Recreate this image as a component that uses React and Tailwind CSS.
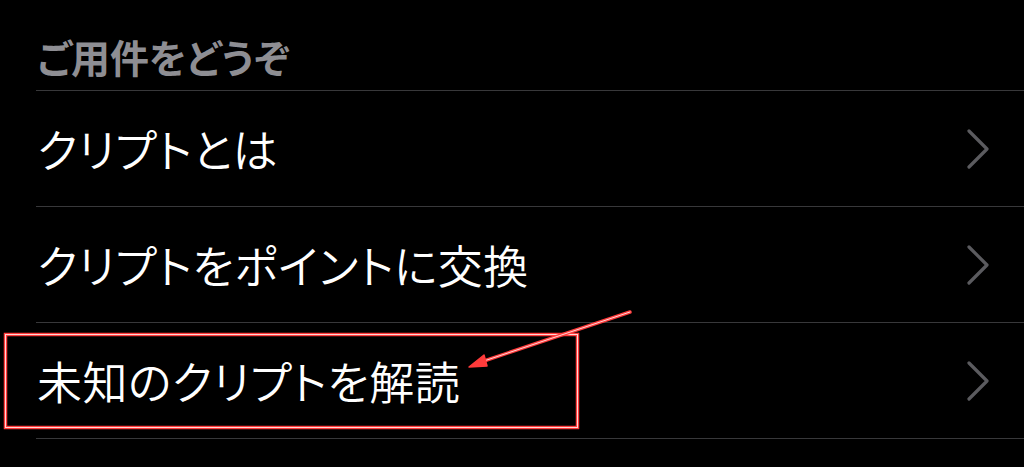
import React from "react";

const font = { fontFamily: '"Noto Sans CJK JP", "Noto Sans", sans-serif', fontFeatureSettings: '"palt"' };

function Chevron() {
  return (
    <svg width="24" height="40" viewBox="0 0 24 40" className="shrink-0">
      <polyline points="3,2 21,20 3,38" fill="none" stroke="#5b5b5f" strokeWidth="3.2" strokeLinecap="round" strokeLinejoin="round" />
    </svg>
  );
}

function Row({ label }) {
  return (
    <div className="h-[116px] flex items-center justify-between border-b border-[#38383a] pr-[34px]">
      <span className="text-[45px] text-white leading-none pl-[1px] font-[350] tracking-[0.5px]">{label}</span>
      <Chevron />
    </div>
  );
}

export default function App() {
  return (
    <div className="relative w-[1024px] h-[467px] bg-black overflow-hidden" style={font}>
      <div className="pl-[36px]">
        <div className="h-[91px] flex items-center pt-[22px] border-b border-[#38383a]">
          <span className="text-[39px] font-bold text-[#8e8e93] leading-none pl-[1px]">ご用件をどうぞ</span>
        </div>
        <Row label="クリプトとは" />
        <Row label="クリプトをポイントに交換" />
        <Row label="未知のクリプトを解読" />
      </div>
      <svg className="absolute inset-0 pointer-events-none" width="1024" height="467">
        <rect x="5.5" y="334.5" width="572" height="93" fill="none" stroke="#ff3b3b" strokeWidth="3.5" />
        <rect x="5.5" y="334.5" width="572" height="93" fill="none" stroke="#ffd6d6" strokeWidth="1" />
        <line x1="630" y1="312" x2="478" y2="363" stroke="#ff3b3b" strokeWidth="3.5" strokeLinecap="round" />
        <line x1="630" y1="312" x2="478" y2="363" stroke="#ffd6d6" strokeWidth="1" strokeLinecap="round" />
        <polygon points="469,367 484,355 487,366" fill="#ff3b3b" stroke="#ff3b3b" strokeWidth="1.5" strokeLinejoin="round" />
      </svg>
    </div>
  );
}
